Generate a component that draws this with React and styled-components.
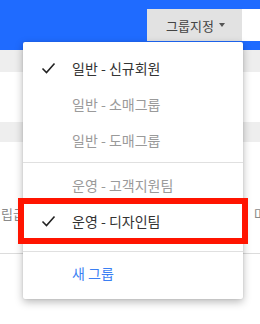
import React from "react";
import styled, { createGlobalStyle } from "styled-components";

const items = [
  { label: "일반 - 신규회원", checked: true },
  { label: "일반 - 소매그룹", muted: true },
  { label: "일반 - 도매그룹", muted: true },
  { divider: true },
  { label: "운영 - 고객지원팀", muted: true },
  { label: "운영 - 디자인팀", checked: true, marked: true },
  { divider: true, wide: true },
  { label: "새 그룹", accent: true },
];

const Check = () => (
  <svg width="18" height="18" viewBox="0 0 18 18">
    <polyline
      points="3.5,9.5 7.5,13.5 15.5,4.5"
      fill="none"
      stroke="#222"
      strokeWidth="1.6"
    />
  </svg>
);

const App = () => {
  return (
    <Page>
      <GlobalStyle />
      <Header>
        <GroupButton>
          그룹지정
          <Caret />
        </GroupButton>
        <HeaderBlank />
      </Header>
      <Strip />
      <Spacer h={50} />
      <Strip h={20} />
      <BgRow>
        <BgText>립급</BgText>
        <BgText>마</BgText>
      </BgRow>
      <BgLine />

      <Menu>
        {items.map((it, i) =>
          it.divider ? (
            <Divider key={i} wide={it.wide} />
          ) : (
            <Item key={i} $marked={it.marked}>
              <CheckSlot>{it.checked && <Check />}</CheckSlot>
              <Label $muted={it.muted} $accent={it.accent}>
                {it.label}
              </Label>
            </Item>
          )
        )}
      </Menu>
    </Page>
  );
};

export default App;

const GlobalStyle = createGlobalStyle`
  body {
    margin: 0;
    background: #fff;
    font-family: "Noto Sans CJK KR", "Noto Sans", sans-serif;
  }
`;

const Page = styled.div`
  position: relative;
  width: 260px;
  height: 324px;
  overflow: hidden;
  background: #fff;
`;

const Header = styled.div`
  height: 50px;
  background: #1f6bff;
  display: flex;
  justify-content: flex-end;
  align-items: flex-start;
  padding-top: 9px;
  box-sizing: border-box;
`;

const GroupButton = styled.div`
  width: 95px;
  height: 32px;
  background: #e2e2e2;
  display: flex;
  align-items: center;
  justify-content: center;
  gap: 5px;
  padding-left: 2px;
  box-sizing: border-box;
  font-size: 13px;
  color: #444;
`;

const Caret = styled.span`
  width: 0;
  height: 0;
  border-left: 3.5px solid transparent;
  border-right: 3.5px solid transparent;
  border-top: 4px solid #555;
`;

const HeaderBlank = styled.div`
  width: 18px;
  height: 32px;
  background: #fff;
`;

const Strip = styled.div`
  height: ${(p) => p.h || 22}px;
  background: #eeeeee;
`;

const Spacer = styled.div`
  height: ${(p) => p.h}px;
`;

const BgRow = styled.div`
  margin-top: 62px;
  height: 18px;
  display: flex;
  justify-content: space-between;
  align-items: center;
  padding: 0 0 0 1px;
  margin-right: -6px;
`;

const BgText = styled.span`
  font-size: 13px;
  color: #8a8a8a;
`;

const BgLine = styled.div`
  margin-top: 31px;
  height: 1px;
  background: #dcdcdc;
`;

const Menu = styled.div`
  position: absolute;
  left: 23px;
  top: 42px;
  width: 220px;
  padding: 8px 0;
  background: #fff;
  border-radius: 2px;
  box-shadow: 0 3px 8px rgba(0, 0, 0, 0.28), 0 0 2px rgba(0, 0, 0, 0.12);
`;

const Item = styled.div`
  height: 36px;
  display: flex;
  align-items: center;
  outline: ${(p) => (p.$marked ? "6px solid #ff1400" : "none")};
  outline-offset: -1px;
`;

const CheckSlot = styled.div`
  width: 49px;
  padding-left: 16px;
  box-sizing: border-box;
  display: flex;
  align-items: center;
`;

const Label = styled.span`
  font-size: 14px;
  color: ${(p) => (p.$accent ? "#3b7ff3" : p.$muted ? "#9a9a9a" : "#333")};
`;

const Divider = styled.div`
  height: 1px;
  background: #e0e0e0;
  margin: ${(p) => (p.wide ? "12px 0 3px" : "4px 0")};
`;
